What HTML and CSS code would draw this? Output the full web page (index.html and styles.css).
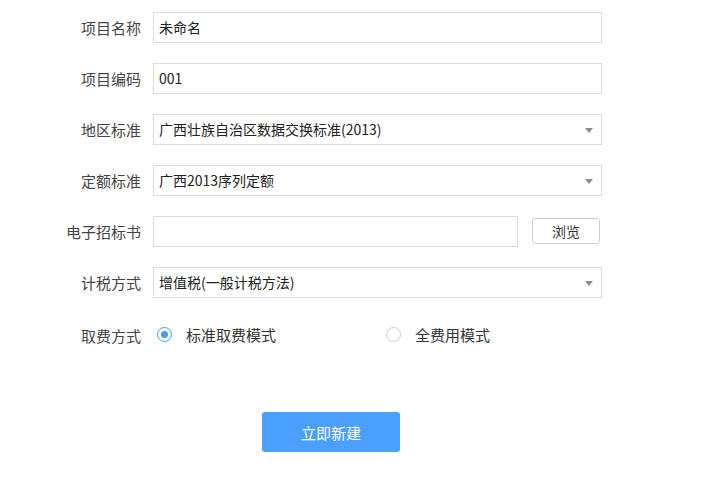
FILE: index.html
```html
<!DOCTYPE html>
<html lang="zh-CN">
<head>
<meta charset="utf-8">
<title>新建项目</title>
<link rel="stylesheet" href="styles.css">
</head>
<body>
<form class="page">
  <div class="form">
    <label class="lbl">项目名称</label>
    <div class="field"><div class="input wide">未命名</div></div>

    <label class="lbl">项目编码</label>
    <div class="field"><div class="input wide">001</div></div>

    <label class="lbl">地区标准</label>
    <div class="field"><div class="input wide select">广西壮族自治区数据交换标准(2013)<span class="arrow"></span></div></div>

    <label class="lbl">定额标准</label>
    <div class="field"><div class="input wide select">广西2013序列定额<span class="arrow"></span></div></div>

    <label class="lbl">电子招标书</label>
    <div class="field file-row"><div class="input file"></div><button type="button" class="browse">浏览</button></div>

    <label class="lbl">计税方式</label>
    <div class="field"><div class="input wide select">增值税(一般计税方法)<span class="arrow"></span></div></div>

    <label class="lbl radio-lbl">取费方式</label>
    <div class="field radios">
      <span class="opt"><span class="radio on"></span>标准取费模式</span>
      <span class="opt"><span class="radio"></span>全费用模式</span>
    </div>
  </div>

  <div class="actions"><button type="button" class="submit">立即新建</button></div>
</form>
</body>
</html>
```

FILE: styles.css
```css
* { box-sizing: border-box; }
body {
  margin: 0;
  background: #fff;
  font-family: "Noto Sans CJK SC", "Microsoft YaHei", sans-serif;
  font-size: 14px;
  color: #333;
}
.page {
  padding-top: 12px;
}
.form {
  display: grid;
  grid-template-columns: 141px 1fr;
  grid-auto-rows: 31px;
  column-gap: 12px;
  row-gap: 20px;
}
.lbl {
  text-align: right;
  line-height: 31px;
  font-size: 15px;
  color: #444;
  white-space: nowrap;
}
.field {
  display: flex;
  align-items: center;
}
.input {
  height: 31px;
  border: 1px solid #dcdcdc;
  line-height: 29px;
  padding-left: 5px;
  color: #222;
  background: #fff;
  position: relative;
}
.wide { width: 449px; }
.file { width: 365px; }
.arrow {
  position: absolute;
  right: 8px;
  top: 13px;
  width: 0;
  height: 0;
  border-left: 4px solid transparent;
  border-right: 4px solid transparent;
  border-top: 5px solid #8c8c8c;
}
.browse {
  margin-left: 14px;
  width: 68px;
  height: 26px;
  border: 1px solid #cfcfcf;
  border-radius: 3px;
  background: #fff;
  font-family: inherit;
  font-size: 14px;
  color: #333;
  padding: 0;
  margin-top: -1px;
}
.radio-lbl, .radios { margin-top: 2px; }
.radios { padding-left: 4px; }
.opt {
  display: flex;
  align-items: center;
  width: 229px;
  font-size: 15px;
  color: #333;
}
.radio {
  width: 15px;
  height: 15px;
  border-radius: 50%;
  border: 1px solid #cccccc;
  margin-right: 14px;
  display: flex;
  align-items: center;
  justify-content: center;
  flex: none;
}
.radio.on { border-color: #409eff; }
.radio.on::after {
  content: "";
  width: 7px;
  height: 7px;
  border-radius: 50%;
  background: #409eff;
}
.actions {
  margin-top: 63px;
  padding-left: 262px;
}
.submit {
  display: block;
  width: 138px;
  height: 40px;
  border: none;
  border-radius: 3px;
  background: #4b9ffe;
  color: #fff;
  font-family: inherit;
  font-size: 15px;
  padding: 0;
}
```
